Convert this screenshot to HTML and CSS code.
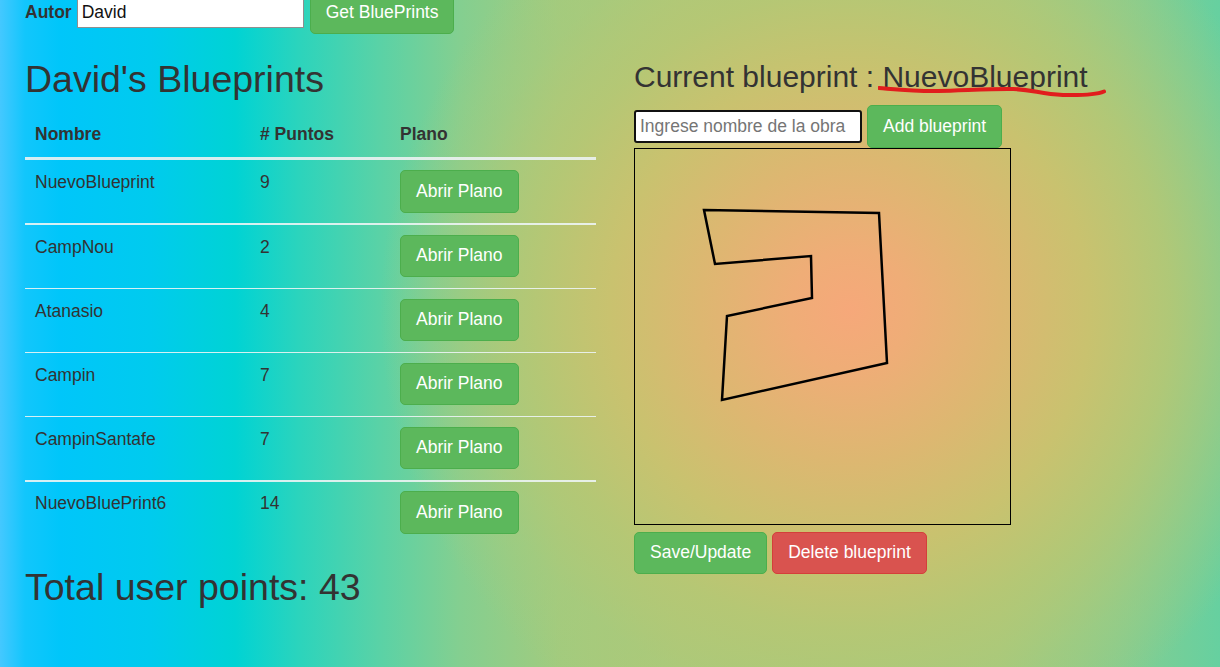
FILE: index.html
```html
<!DOCTYPE html>
<html lang="es">
<head>
<meta charset="utf-8">
<title>Blueprints</title>
<link rel="stylesheet" href="styles.css">
</head>
<body>
<div class="page">
  <div class="topbar">
    <label class="autor-label" for="autor">Autor</label>
    <input id="autor" class="autor-input" type="text" value="David">
    <button class="btn btn-success">Get BluePrints</button>
  </div>
  <div class="columns">
    <section class="left">
      <h2 class="title">David's Blueprints</h2>
      <table class="bp-table">
        <thead>
          <tr><th class="c-name">Nombre</th><th class="c-pts"># Puntos</th><th>Plano</th></tr>
        </thead>
        <tbody>
          <tr><td>NuevoBlueprint</td><td>9</td><td><button class="btn btn-success">Abrir Plano</button></td></tr>
          <tr class="row-strong"><td>CampNou</td><td>2</td><td><button class="btn btn-success">Abrir Plano</button></td></tr>
          <tr><td>Atanasio</td><td>4</td><td><button class="btn btn-success">Abrir Plano</button></td></tr>
          <tr><td>Campin</td><td>7</td><td><button class="btn btn-success">Abrir Plano</button></td></tr>
          <tr><td>CampinSantafe</td><td>7</td><td><button class="btn btn-success">Abrir Plano</button></td></tr>
          <tr class="row-strong"><td>NuevoBluePrint6</td><td>14</td><td><button class="btn btn-success">Abrir Plano</button></td></tr>
        </tbody>
      </table>
      <h2 class="total">Total user points: 43</h2>
    </section>
    <section class="right">
      <h3 class="current">Current blueprint : <span class="current-name">NuevoBlueprint</span>
        <svg class="scribble" width="232" height="18" viewBox="0 0 232 18" aria-hidden="true">
          <path d="M1,4 C20,5.5 40,7.5 60,7 C85,6.5 115,4.5 135,5 C155,5.5 162,10 185,11 C205,11.5 220,10 226,7.5" fill="none" stroke="#e11d1d" stroke-width="4" stroke-linecap="round"/>
        </svg>
      </h3>
      <div class="form-row">
        <input class="obra-input" type="text" placeholder="Ingrese nombre de la obra">
        <button class="btn btn-success">Add blueprint</button>
      </div>
      <div class="canvas">
        <svg width="375" height="375" viewBox="0 0 375 375">
          <polygon points="69,61 244,64 252,214 87,251 92,167 177,149 176,107 80,115" fill="none" stroke="#000" stroke-width="2.5" stroke-linejoin="miter"/>
        </svg>
      </div>
      <div class="actions">
        <button class="btn btn-success">Save/Update</button>
        <button class="btn btn-danger">Delete blueprint</button>
      </div>
    </section>
  </div>
</div>
</body>
</html>
```
FILE: styles.css
```css
* {
  box-sizing: border-box;
}

html,
body {
  margin: 0;
  padding: 0;
}

body {
  width: 1220px;
  height: 667px;
  overflow: hidden;
  font-family: "Liberation Sans", Arial, sans-serif;
  font-size: 17.5px;
  line-height: 25px;
  color: #333;
  background:
    radial-gradient(circle at 850px 310px,
      #f6a87a 0,
      #efad77 60px,
      #ddb771 150px,
      rgba(201, 194, 111, 1) 240px,
      rgba(182, 199, 116, 0.9) 320px,
      rgba(168, 202, 124, 0.5) 400px,
      rgba(160, 203, 128, 0) 470px),
    linear-gradient(90deg,
      #44c8ff 0,
      #12c6fc 25px,
      #00c6fa 60px,
      #00cbee 150px,
      #00d3d4 235px,
      #2cd4bc 300px,
      #5ad2a6 380px,
      #84cf90 460px,
      #a2cb7e 560px,
      #b0c877 680px,
      #a6ca7d 1000px,
      #86cd90 1120px,
      #66d0a0 1220px);
}

.page {
  padding-left: 25px;
}

/* top bar */
.topbar {
  display: flex;
  align-items: baseline;
  gap: 5px;
  margin-top: -9px;
  height: 42.5px;
}

.autor-label {
  font-weight: bold;
}

.autor-input {
  width: 227px;
  height: 31px;
  margin-right: 1px;
  padding: 1px 4px;
  border: 1px solid #8f8f8f;
  background: #fff;
  color: #111;
  font-family: inherit;
  font-size: 17.5px;
  outline: none;
}

/* buttons */
.btn {
  display: inline-block;
  vertical-align: top;
  padding: 7.75px 15px;
  font-family: inherit;
  font-size: 17.5px;
  line-height: 25px;
  font-weight: 400;
  color: #fff;
  border: 1px solid transparent;
  border-radius: 5px;
  white-space: nowrap;
  cursor: pointer;
}

.btn-success {
  background: #5cb85c;
  border-color: #4cae4c;
}

.btn-danger {
  background: #d9534f;
  border-color: #d43f3a;
}

/* columns */
.columns {
  display: flex;
  gap: 38px;
}

.left {
  width: 571px;
  flex: none;
}

.right {
  flex: 1;
}

.title {
  margin: 25px 0 12.5px;
  font-size: 37.5px;
  line-height: 41.25px;
  font-weight: 400;
}

/* table */
.bp-table {
  width: 571px;
  border-collapse: separate;
  border-spacing: 0;
  margin-bottom: 23px;
}

.bp-table th {
  text-align: left;
  padding: 10px 10px 9.75px;
  font-weight: bold;
  border-bottom: 3px solid rgba(236, 242, 242, 0.9);
}

.bp-table .c-name {
  width: 225px;
}

.bp-table .c-pts {
  width: 140px;
}

.bp-table td {
  vertical-align: top;
  padding: 10px 10px 10.5px;
  border-top: 1px solid rgba(236, 244, 244, 0.9);
}

.bp-table tbody tr:first-child td {
  border-top: 0;
}

.bp-table tbody tr.row-strong td {
  border-top-width: 2px;
  padding-top: 9.5px;
}

.total {
  margin: 0;
  font-size: 37.5px;
  line-height: 41.25px;
  font-weight: 400;
}

/* right column */
.current {
  position: relative;
  margin: 26px 0 12.5px;
  font-size: 30px;
  line-height: 33px;
  font-weight: 400;
  white-space: nowrap;
}

.scribble {
  position: absolute;
  left: 244px;
  top: 24px;
}

.form-row {
  display: flex;
  align-items: center;
  gap: 5px;
  height: 42.5px;
}

.obra-input {
  width: 228px;
  height: 33px;
  padding: 0 4px;
  border: 2px solid #111;
  border-radius: 3px;
  box-shadow: inset 0 0 0 1px #fff;
  background: #fff;
  font-family: inherit;
  font-size: 17.5px;
  color: #333;
  outline: none;
}

.obra-input::placeholder {
  color: #757575;
}

.canvas {
  width: 377px;
  height: 377px;
  border: 1px solid #000;
}

.canvas svg {
  display: block;
}

.actions {
  display: flex;
  gap: 5px;
  margin-top: 7px;
}
```
